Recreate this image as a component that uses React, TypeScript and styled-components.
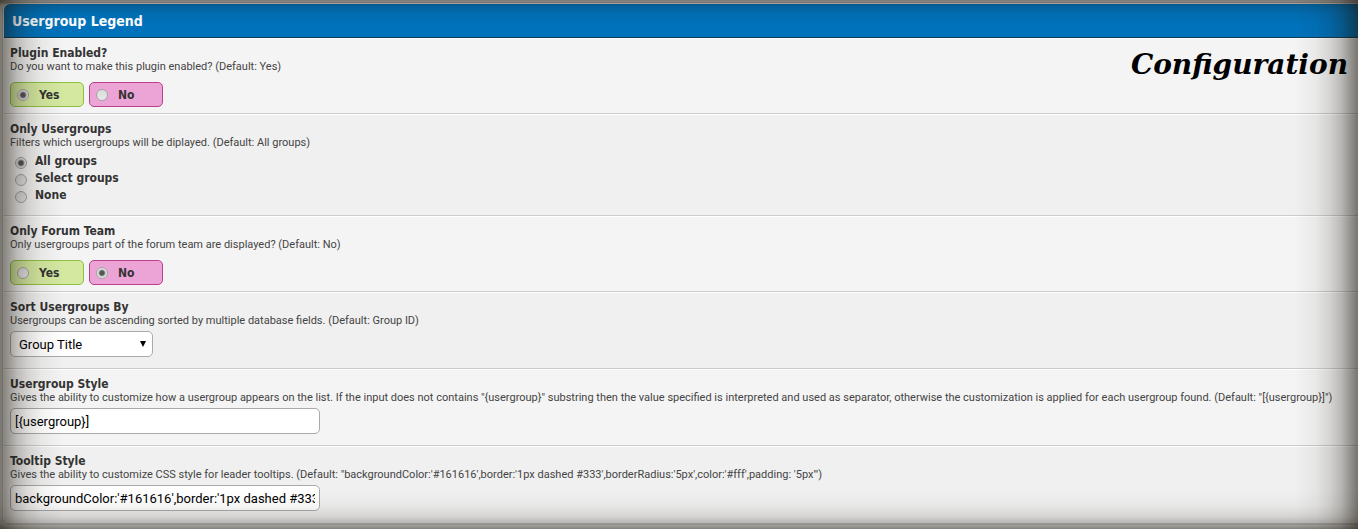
import React from 'react';
import styled, { createGlobalStyle } from 'styled-components';

const headingFont = "'DejaVu Sans Condensed', Tahoma, sans-serif";
const textFont = "Roboto, Tahoma, sans-serif";

const GlobalStyle = createGlobalStyle`
  *, *::before, *::after { box-sizing: border-box; }
  body {
    margin: 0;
    background: #f4f4f4;
    color: #333;
    font-family: ${headingFont};
    font-size: 12px;
    overflow-x: hidden;
  }
`;

const Page = styled.main`
  position: relative;
  min-height: 100vh;
  padding: 2px 0 5px 2px;
`;

const shade = (a: number) => `rgba(24, 18, 8, ${a})`;
const sideStops = `${shade(0.56)}, ${shade(0.42)} 8px, ${shade(0.26)} 17px, ${shade(0.14)} 28px, ${shade(0.05)} 42px, transparent 64px`;
const bottomStops = `${shade(0.54)}, ${shade(0.44)} 3px, ${shade(0.26)} 7px, ${shade(0.12)} 14px, ${shade(0.04)} 24px, transparent 40px`;
const topStops = `${shade(0.54)}, ${shade(0.46)} 3px, ${shade(0.2)} 5px, ${shade(0.06)} 14px, transparent 26px`;

const Vignette = styled.div`
  position: absolute;
  inset: 0;
  pointer-events: none;
  background:
    linear-gradient(to right, ${sideStops}),
    linear-gradient(to left, ${sideStops}),
    linear-gradient(to bottom, ${topStops}),
    linear-gradient(to top, ${bottomStops});
`;

const Panel = styled.form`
  border: 1px solid #ccc;
  border-right: 0;
  border-radius: 7px 0 0 7px;
  padding: 1px 0 0 1px;
  background: #fff;
  overflow: hidden;
`;

const Header = styled.h1`
  margin: 0;
  height: 34px;
  padding: 1px 8px 0;
  border-bottom: 1px solid #163c50;
  border-radius: 6px 0 0 0;
  background: #0072bc;
  color: #fff;
  font-size: 14px;
  line-height: 33px;
`;

const Row = styled.section<{ $height: number }>`
  min-height: ${p => p.$height}px;
  padding: 7px 0 5px 6px;
  border-top: 1px solid #fff;
  border-bottom: 1px solid #ccc;
  background: #f4f4f4;
  &:nth-of-type(even) { background: #f0f0f0; }
`;

const Title = styled.h2`
  margin: 0;
  font-size: 12px;
  line-height: 14px;
`;

const Description = styled.p`
  margin: 0;
  color: #444;
  font-family: ${textFont};
  font-size: 11px;
  line-height: 13px;
  white-space: nowrap;
`;

const Choices = styled.div`
  display: flex;
  gap: 5px;
  margin-top: 9px;
`;

const Pill = styled.label<{ $tone: 'yes' | 'no' }>`
  display: flex;
  align-items: center;
  gap: 10px;
  width: 74px;
  height: 25px;
  padding-left: 6px;
  border: 1px solid ${p => (p.$tone === 'yes' ? '#90c040' : '#b8408c')};
  border-radius: 5px;
  background: ${p => (p.$tone === 'yes' ? '#d4e8a0' : '#eca4d6')};
  font-weight: bold;
`;

const Radio = styled.input.attrs({ type: 'radio' })`
  appearance: none;
  flex: none;
  width: 12px;
  height: 12px;
  margin: 0;
  border: 1px solid #a4a4a4;
  border-radius: 50%;
  background: linear-gradient(#dcdcdc, #e8e8e8);
  &:checked {
    background: radial-gradient(circle, #555 0 2px, #e2e2e2 4px);
  }
`;

const RadioList = styled.div`
  margin: 4px 0 0 5px;
`;

const RadioLine = styled.label`
  display: flex;
  gap: 8px;
  height: 17px;
  font-weight: bold;
  line-height: 16px;
  ${Radio} { margin-top: 4px; }
`;

const SelectBox = styled.div`
  position: relative;
  width: 143px;
  margin-top: 4px;
`;

const Select = styled.select`
  appearance: none;
  display: block;
  width: 100%;
  height: 26px;
  padding: 0 20px 0 8px;
  border: 1px solid #aaa;
  border-radius: 5px;
  background: #fff;
  color: #000;
  font-family: ${textFont};
  font-size: 13px;
`;

const Arrow = styled.svg`
  position: absolute;
  top: 9px;
  right: 6px;
  pointer-events: none;
`;

const TextInput = styled.input.attrs({ type: 'text' })`
  display: block;
  width: 310px;
  height: 26px;
  margin-top: 4px;
  padding: 0 4px;
  border: 1px solid #aaa;
  border-radius: 5px;
  background: #fff;
  color: #000;
  font-family: ${textFont};
  font-size: 13px;
`;

const Caption = styled.div`
  position: absolute;
  top: 47px;
  right: 10px;
  color: #000;
  font: italic bold 28px/36px 'DejaVu Serif', serif;
`;

function YesNo({ name, value, label }: { name: string; value: 'yes' | 'no'; label: string }) {
  return (
    <Choices role="radiogroup" aria-label={label}>
      <Pill $tone="yes"><Radio name={name} value="yes" defaultChecked={value === 'yes'} />Yes</Pill>
      <Pill $tone="no"><Radio name={name} value="no" defaultChecked={value === 'no'} />No</Pill>
    </Choices>
  );
}

function Setting({ title, text, height, htmlFor, children }: {
  title: string; text: string; height: number; htmlFor?: string; children: React.ReactNode;
}) {
  return (
    <Row $height={height}>
      <Title>{htmlFor ? <label htmlFor={htmlFor}>{title}</label> : title}</Title>
      <Description>{text}</Description>
      {children}
    </Row>
  );
}

export default function App() {
  return (
    <Page>
      <GlobalStyle />
      <Panel>
        <Header>Usergroup Legend</Header>
        <Setting height={76} title="Plugin Enabled?" text="Do you want to make this plugin enabled? (Default: Yes)">
          <YesNo name="enabled" value="yes" label="Plugin Enabled?" />
        </Setting>
        <Setting height={102} title="Only Usergroups" text="Filters which usergroups will be diplayed. (Default: All groups)">
          <RadioList role="radiogroup" aria-label="Only Usergroups">
            <RadioLine><Radio name="groups" value="all" defaultChecked />All groups</RadioLine>
            <RadioLine><Radio name="groups" value="select" />Select groups</RadioLine>
            <RadioLine><Radio name="groups" value="none" />None</RadioLine>
          </RadioList>
        </Setting>
        <Setting height={76} title="Only Forum Team" text="Only usergroups part of the forum team are displayed? (Default: No)">
          <YesNo name="team" value="no" label="Only Forum Team" />
        </Setting>
        <Setting height={77} htmlFor="sort" title="Sort Usergroups By" text="Usergroups can be ascending sorted by multiple database fields. (Default: Group ID)">
          <SelectBox>
            <Select id="sort" defaultValue="title">
              <option value="title">Group Title</option>
              <option value="id">Group ID</option>
            </Select>
            <Arrow width="8" height="8" viewBox="0 0 8 8" aria-hidden="true"><path d="M1 1h6L4 7z" fill="#000" /></Arrow>
          </SelectBox>
        </Setting>
        <Setting
          height={77}
          htmlFor="style"
          title="Usergroup Style"
          text={'Gives the ability to customize how a usergroup appears on the list. If the input does not contains "{usergroup}" substring then the value specified is interpreted and used as separator, otherwise the customization is applied for each usergroup found. (Default: "[{usergroup}]")'}
        >
          <TextInput id="style" defaultValue="[{usergroup}]" />
        </Setting>
        <Setting
          height={78}
          htmlFor="tooltip"
          title="Tooltip Style"
          text={`Gives the ability to customize CSS style for leader tooltips. (Default: "backgroundColor:'#161616',border:'1px dashed #333',borderRadius:'5px',color:'#fff',padding: '5px'")`}
        >
          <TextInput id="tooltip" defaultValue="backgroundColor:'#161616',border:'1px dashed #333',borderRadius:'5px',color:'#fff',padding: '5px'" />
        </Setting>
      </Panel>
      <Vignette />
      <Caption>Configuration</Caption>
    </Page>
  );
}
